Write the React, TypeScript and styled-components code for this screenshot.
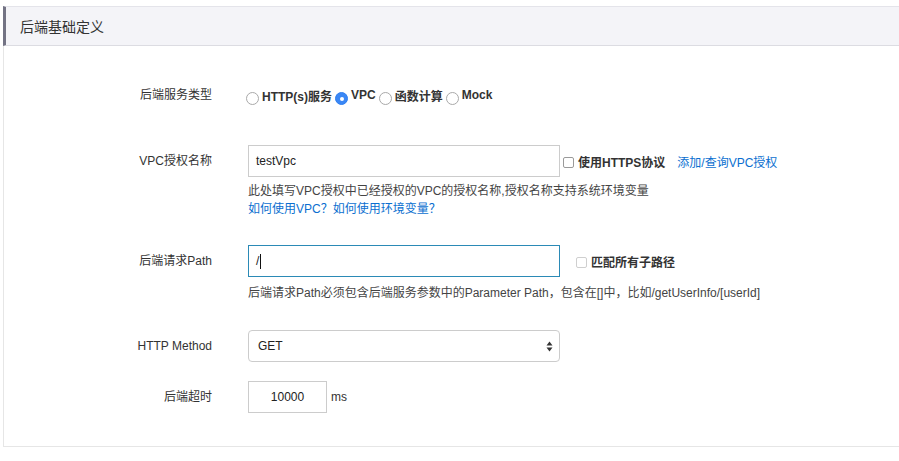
import React from "react";
import styled, { createGlobalStyle } from "styled-components";

const Global = createGlobalStyle`
  html, body { margin: 0; padding: 0; background: #fff; }
  body {
    font-family: "Liberation Sans", "Noto Sans CJK SC", Arial, sans-serif;
    color: #333;
    font-size: 12px;
  }
`;

const Panel = styled.div`
  margin: 6px 0 0 3px;
`;

const Header = styled.div`
  height: 40px;
  box-sizing: border-box;
  display: flex;
  align-items: center;
  padding-left: 14px;
  background: #f4f4f8;
  border-top: 1px solid #e4e4ea;
  border-bottom: 1px solid #dcdce2;
  border-left: 3px solid #737384;
  font-size: 14px;
  color: #333;
`;

const Body = styled.div`
  border-left: 1px solid #e6e6e6;
  border-bottom: 1px solid #e6e6e6;
  padding: 33px 0 33px 0;
  display: flex;
  flex-direction: column;
`;

const Row = styled.div<{ $mt?: number }>`
  display: flex;
  align-items: flex-start;
  margin-top: ${(p) => p.$mt ?? 0}px;
`;

const Label = styled.div`
  width: 208px;
  flex: none;
  text-align: right;
  height: 32px;
  line-height: 32px;
  margin-right: 36px;
  font-size: 12px;
  color: #333;
`;

const Field = styled.div`
  display: flex;
  flex-direction: column;
`;

const Line = styled.div`
  display: flex;
  align-items: center;
  height: 32px;
`;

const RadioGroup = styled.div`
  display: flex;
  align-items: center;
  height: 32px;
  margin-left: -2px;
`;

const RadioItem = styled.label`
  display: flex;
  align-items: center;
  font-weight: bold;
  font-size: 12px;
  color: #333;
  margin-right: 3px;
`;

const RadioDot = styled.span<{ $on?: boolean }>`
  width: 13px;
  height: 13px;
  box-sizing: border-box;
  border-radius: 50%;
  border: 1px solid ${(p) => (p.$on ? "#2f7ff0" : "#a9a9a9")};
  background: ${(p) => (p.$on ? "#3a87f5" : "#fff")};
  display: inline-flex;
  align-items: center;
  justify-content: center;
  margin-right: 3px;
  margin-top: 7px;
  &::after {
    content: "";
    width: 4px;
    height: 4px;
    border-radius: 50%;
    background: #fff;
    display: ${(p) => (p.$on ? "block" : "none")};
  }
`;

const TextInput = styled.div<{ $focus?: boolean; $w: number; $center?: boolean }>`
  width: ${(p) => p.$w}px;
  height: 32px;
  box-sizing: border-box;
  border: 1px solid ${(p) => (p.$focus ? "#2b8ab6" : "#cccccc")};
  padding: 0 7px;
  display: flex;
  align-items: center;
  justify-content: ${(p) => (p.$center ? "center" : "flex-start")};
  font-size: 12px;
  color: #222;
`;

const Caret = styled.span`
  display: inline-block;
  width: 1px;
  height: 15px;
  background: #111;
  margin-left: 1px;
`;

const Check = styled.span<{ $light?: boolean }>`
  width: 11px;
  height: 11px;
  box-sizing: border-box;
  border: 1px solid ${(p) => (p.$light ? "#cfcfcf" : "#9a9a9a")};
  border-radius: 2px;
  background: #fff;
  margin-right: 4px;
  margin-top: 2px;
`;

const CheckLabel = styled.label<{ $ml: number }>`
  display: flex;
  align-items: center;
  margin-left: ${(p) => p.$ml}px;
  font-weight: bold;
  font-size: 12px;
  color: #333;
`;

const Link = styled.a<{ $ml?: number }>`
  color: #0b6fd0;
  text-decoration: none;
  font-size: 12px;
  margin-left: ${(p) => p.$ml ?? 0}px;
`;

const Help = styled.div<{ $mt: number }>`
  margin-top: ${(p) => p.$mt}px;
  font-size: 12px;
  line-height: 18px;
  color: #444;
`;

const SelectBox = styled.div`
  width: 312px;
  height: 32px;
  box-sizing: border-box;
  border: 1px solid #cccccc;
  border-radius: 4px;
  padding: 0 6px 0 9px;
  display: flex;
  align-items: center;
  justify-content: space-between;
  font-size: 12px;
  color: #222;
`;

const Unit = styled.span`
  margin-left: 4px;
  font-size: 12px;
  color: #333;
`;

const Arrows = () => (
  <svg width="7" height="11" viewBox="0 0 7 11">
    <path d="M3.5 0.5 L6.5 4.5 L0.5 4.5 Z" fill="#333" />
    <path d="M3.5 10.5 L6.5 6.5 L0.5 6.5 Z" fill="#333" />
  </svg>
);

export default function App() {
  return (
    <>
      <Global />
      <Panel>
        <Header>后端基础定义</Header>
        <Body>
          <Row>
            <Label>后端服务类型</Label>
            <RadioGroup>
              <RadioItem>
                <RadioDot />
                HTTP(s)服务
              </RadioItem>
              <RadioItem>
                <RadioDot $on />
                VPC
              </RadioItem>
              <RadioItem>
                <RadioDot />
                函数计算
              </RadioItem>
              <RadioItem>
                <RadioDot />
                Mock
              </RadioItem>
            </RadioGroup>
          </Row>

          <Row $mt={34}>
            <Label>VPC授权名称</Label>
            <Field>
              <Line>
                <TextInput $w={312}>testVpc</TextInput>
                <CheckLabel $ml={3}>
                  <Check />
                  使用HTTPS协议
                </CheckLabel>
                <Link $ml={12}>添加/查询VPC授权</Link>
              </Line>
              <Help $mt={5}>
                此处填写VPC授权中已经授权的VPC的授权名称,授权名称支持系统环境变量
                <br />
                <Link>如何使用VPC？</Link>
                <Link>如何使用环境变量？</Link>
              </Help>
            </Field>
          </Row>

          <Row $mt={27}>
            <Label>后端请求Path</Label>
            <Field>
              <Line>
                <TextInput $w={312} $focus>
                  /<Caret />
                </TextInput>
                <CheckLabel $ml={16}>
                  <Check $light />
                  匹配所有子路径
                </CheckLabel>
              </Line>
              <Help $mt={7}>
                后端请求Path必须包含后端服务参数中的Parameter Path，包含在[]中，比如/getUserInfo/[userId]
              </Help>
            </Field>
          </Row>

          <Row $mt={28}>
            <Label>HTTP Method</Label>
            <SelectBox>
              GET
              <Arrows />
            </SelectBox>
          </Row>

          <Row $mt={19}>
            <Label>后端超时</Label>
            <Line>
              <TextInput $w={79} $center>
                10000
              </TextInput>
              <Unit>ms</Unit>
            </Line>
          </Row>
        </Body>
      </Panel>
    </>
  );
}
